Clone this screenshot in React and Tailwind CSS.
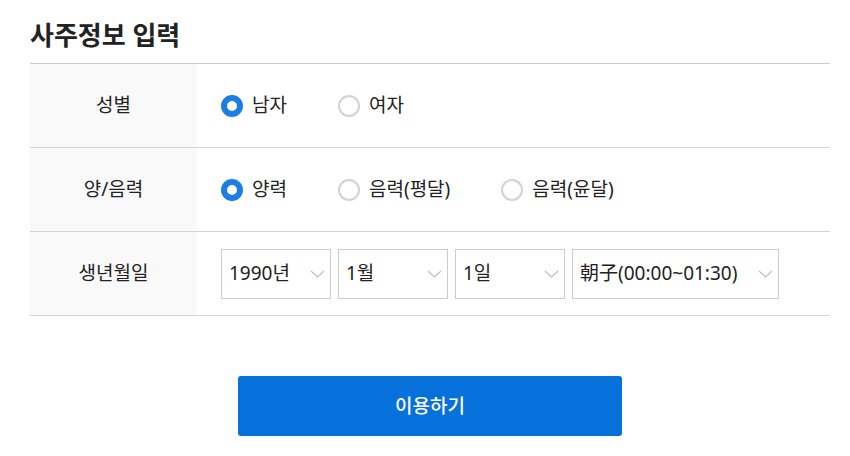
import React, { useState } from 'react';

const font = { fontFamily: '"Noto Sans", "Noto Sans CJK KR", sans-serif' };

function Radio({ checked, label, onClick }) {
    return (
        <button type="button" onClick={onClick} className="flex items-center gap-[9px] mr-[51px]">
            {checked ? (
                <span className="w-[22px] h-[22px] rounded-full border-[6px] border-[#1a7ee6] bg-white" />
            ) : (
                <span className="w-[22px] h-[22px] rounded-full border-2 border-[#d2d2d2] bg-white" />
            )}
            <span className="text-[19px] text-[#222]">{label}</span>
        </button>
    );
}

function Chevron() {
    return (
        <svg width="15" height="8" viewBox="0 0 15 8" fill="none">
            <path d="M1 1l6.5 6 6.5-6" stroke="#bdbdbd" strokeWidth="1.2" />
        </svg>
    );
}

function SelectBox({ value, width }) {
    return (
        <div className={`${width} h-[50px] border border-[#cccccc] bg-white flex items-center justify-between pl-[7px] pr-[5px]`}>
            <span className="text-[19px] text-[#222]">{value}</span>
            <Chevron />
        </div>
    );
}

function Row({ label, children }) {
    return (
        <div className="flex h-[84px] border-b border-[#d4d4d4]">
            <div className="w-[167px] bg-[#f9f9f9] flex items-center justify-center text-[19px] text-[#222]">{label}</div>
            <div className="flex-1 flex items-center pl-[24px]">{children}</div>
        </div>
    );
}

export default function App() {
    const [gender, setGender] = useState('m');
    const [cal, setCal] = useState('solar');

    return (
        <div className="w-[850px] h-[456px] bg-white pl-[30px] pr-[20px] pt-[16px]" style={font}>
            <h2 className="text-[26px] font-bold text-[#222] leading-[38px] mb-[9px]">사주정보 입력</h2>
            <div className="border-t border-[#cccccc]">
                <Row label="성별">
                    <Radio checked={gender === 'm'} label="남자" onClick={() => setGender('m')} />
                    <Radio checked={gender === 'f'} label="여자" onClick={() => setGender('f')} />
                </Row>
                <Row label="양/음력">
                    <Radio checked={cal === 'solar'} label="양력" onClick={() => setCal('solar')} />
                    <Radio checked={cal === 'lunar'} label="음력(평달)" onClick={() => setCal('lunar')} />
                    <Radio checked={cal === 'leap'} label="음력(윤달)" onClick={() => setCal('leap')} />
                </Row>
                <Row label="생년월일">
                    <div className="flex gap-[7px]">
                        <SelectBox value="1990년" width="w-[110px]" />
                        <SelectBox value="1월" width="w-[110px]" />
                        <SelectBox value="1일" width="w-[110px]" />
                        <SelectBox value="朝子(00:00~01:30)" width="w-[207px]" />
                    </div>
                </Row>
            </div>
            <div className="flex justify-center mt-[60px]">
                <button type="button" className="w-[384px] h-[60px] bg-[#0670db] rounded-[3px] text-white text-[19px] font-medium">이용하기</button>
            </div>
        </div>
    );
}
